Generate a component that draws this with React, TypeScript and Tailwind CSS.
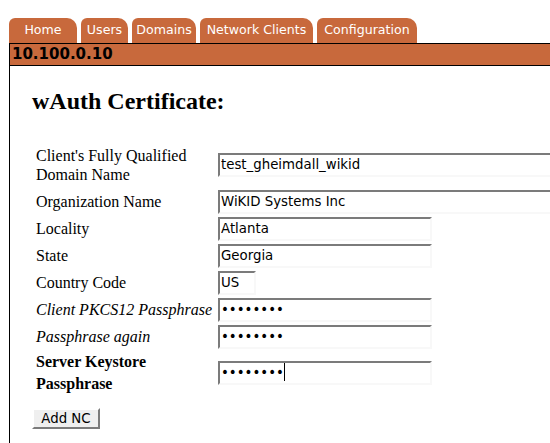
const tabs = [
  { label: 'Home', w: 'w-[68px]' },
  { label: 'Users', w: 'w-[47px]' },
  { label: 'Domains', w: 'w-[64px]' },
  { label: 'Network Clients', w: 'w-[113px]' },
  { label: 'Configuration', w: 'w-[100px]' },
];

const inputCls =
  "h-[24px] border-2 border-t-[#7b7b7b] border-l-[#7b7b7b] border-b-[#f8f8f8] border-r-[#f8f8f8] bg-white pl-[1px] text-[13.33px] text-black outline-none font-['DejaVu_Sans',sans-serif]";

export default function App() {
  return (
    <div className="w-[550px] h-[443px] overflow-hidden bg-white font-['Liberation_Serif',serif] text-black">
      {/* Tabs */}
      <div className="flex gap-[4px] pl-[9px] pt-[18px]">
        {tabs.map((t) => (
          <div
            key={t.label}
            className={`${t.w} h-[25px] rounded-tl-[6px] rounded-tr-[10px] bg-[#c8693c] flex items-center justify-center text-white text-[12.6px] font-['DejaVu_Sans',sans-serif]`}
          >
            {t.label}
          </div>
        ))}
      </div>

      {/* Box */}
      <div className="ml-[9px] w-[560px] h-[400px] border-l border-black">
        <div className="h-[23px] border-t border-b border-black bg-[#c8693c] pl-[2px] flex items-center text-[15px] font-bold font-['DejaVu_Sans',sans-serif] leading-none">
          10.100.0.10
        </div>

        <div className="pl-[22px]">
          <h2 className="mt-[21px] mb-[26px] text-[24px] leading-[28px] font-bold">wAuth Certificate:</h2>

          <div className="pl-[4px] grid grid-cols-[182px_auto] grid-rows-[47px_27px_27px_27px_27px_27px_27px_45px] items-center text-[16px]">
            <div className="leading-[19px]">Client's Fully Qualified<br />Domain Name</div>
            <input className={`${inputCls} w-[340px]`} defaultValue="test_gheimdall_wikid" readOnly />

            <div>Organization Name</div>
            <input className={`${inputCls} w-[340px]`} defaultValue="WiKID Systems Inc" readOnly />

            <div>Locality</div>
            <input className={`${inputCls} w-[214px]`} defaultValue="Atlanta" readOnly />

            <div>State</div>
            <input className={`${inputCls} w-[214px]`} defaultValue="Georgia" readOnly />

            <div>Country Code</div>
            <input className={`${inputCls} w-[38px]`} defaultValue="US" readOnly />

            <div className="italic">Client PKCS12 Passphrase</div>
            <input type="password" className={`${inputCls} w-[214px]`} defaultValue="password" readOnly />

            <div className="italic">Passphrase again</div>
            <input type="password" className={`${inputCls} w-[214px]`} defaultValue="password" readOnly />

            <div className="font-bold leading-[22px]">Server Keystore<br />Passphrase</div>
            <div className="relative w-[214px]">
              <input type="password" className={`${inputCls} w-[214px]`} defaultValue="password" readOnly />
              {/* text caret */}
              <span className="absolute left-[66px] top-[3px] h-[18px] w-[1px] bg-black" />
            </div>
          </div>

          <button className="mt-[13px] w-[68px] h-[21px] border-2 border-t-white border-l-white border-b-[#7b7b7b] border-r-[#7b7b7b] bg-[#efefef] text-[13.33px] leading-none font-['DejaVu_Sans',sans-serif]">
            Add NC
          </button>
        </div>
      </div>
    </div>
  );
}
